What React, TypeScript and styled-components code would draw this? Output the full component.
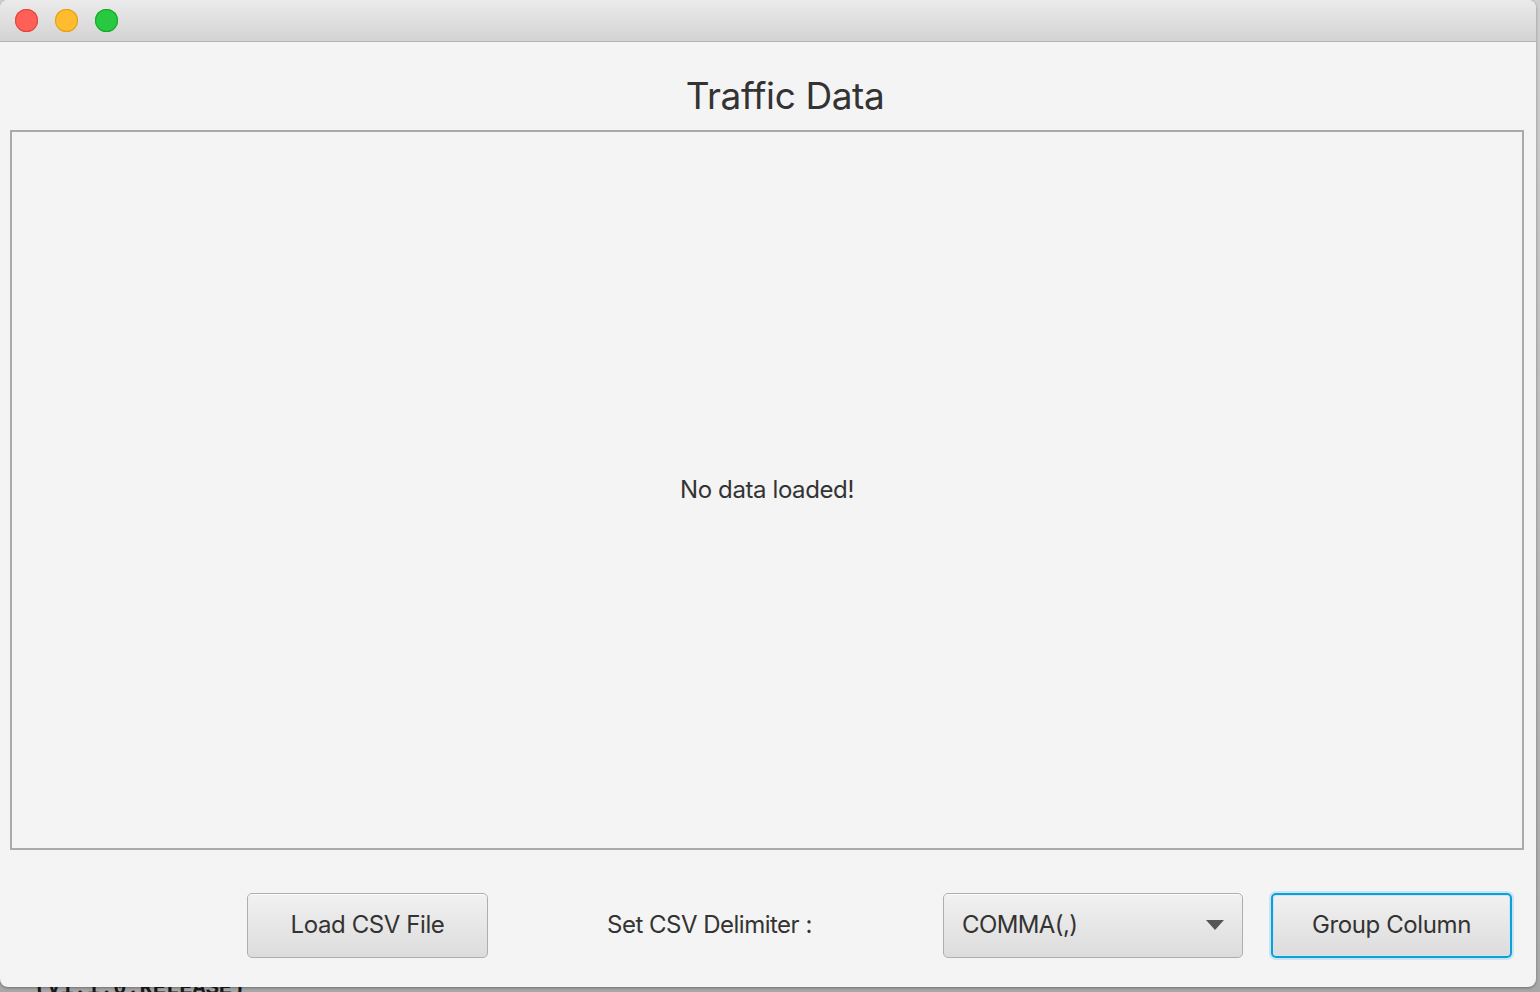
import React from "react";
import styled, { createGlobalStyle } from "styled-components";

const Global = createGlobalStyle`
  html, body { margin: 0; padding: 0; }
  body {
    background: #b9b9b9;
    font-family: Inter, "Noto Sans", "Liberation Sans", sans-serif;
    overflow: hidden;
  }
`;

const Desktop = styled.div`
  position: relative;
  width: 1540px;
  height: 992px;
  background: linear-gradient(#cfcfcf, #a8a8a8);
  overflow: hidden;
`;

const BehindText = styled.div`
  position: absolute;
  left: 34px;
  top: 978px;
  font-family: "Liberation Mono", monospace;
  font-size: 22px;
  line-height: 22px;
  font-weight: 700;
  color: #1a1a1a;
`;

const Window = styled.div`
  position: relative;
  width: 1536px;
  height: 987px;
  display: flex;
  flex-direction: column;
  background: #f4f4f4;
  border-radius: 8px;
  overflow: hidden;
  box-shadow: 0 1px 3px rgba(0, 0, 0, 0.35);
`;

const TitleBar = styled.div`
  height: 41px;
  flex: none;
  display: flex;
  align-items: center;
  gap: 17px;
  padding-left: 15px;
  background: linear-gradient(#ebebeb, #d3d3d3);
  border-bottom: 1px solid #b3b3b3;
`;

const Light = styled.span<{ $fill: string; $edge: string }>`
  width: 23px;
  height: 23px;
  border-radius: 50%;
  background: ${(p) => p.$fill};
  box-shadow: inset 0 0 0 1px ${(p) => p.$edge};
`;

const Content = styled.div`
  flex: 1;
  display: flex;
  flex-direction: column;
`;

const Heading = styled.h1`
  margin: 0;
  height: 88px;
  box-sizing: border-box;
  display: flex;
  align-items: center;
  justify-content: center;
  padding: 18px 0 0 34px;
  font-size: 37px;
  font-weight: 400;
  color: #333;
  letter-spacing: -0.4px;
`;

const TablePane = styled.div`
  margin: 0 12px 0 10px;
  height: 714px;
  border: 2px solid #aaaaaa;
  display: flex;
  align-items: center;
  justify-content: center;
  font-size: 24px;
  color: #333;
  letter-spacing: -0.4px;
  padding-bottom: 2px;
`;

const Footer = styled.div`
  flex: 1;
  display: flex;
  align-items: flex-start;
  padding-top: 43px;
  padding-left: 247px;
`;

const Button = styled.button<{ $focused?: boolean; $gap?: number }>`
  margin-left: ${(p) => p.$gap ?? 0}px;
  width: 241px;
  height: 65px;
  border-radius: 5px;
  border: ${(p) => (p.$focused ? "2px solid #0aa0d8" : "1px solid #aeaeae")};
  box-shadow: ${(p) =>
    p.$focused
      ? "0 0 0 2px rgba(10,160,216,0.18), inset 0 0 0 1px #cfe6f0"
      : "inset 0 1px 0 #fbfbfb"};
  background: linear-gradient(#f1f1f1, #dcdcdc);
  font-family: inherit;
  font-size: 24px;
  color: #333;
  letter-spacing: -0.4px;
  padding: 0 0 3px;
`;

const Label = styled.span<{ $gap: number; $width: number }>`
  margin-left: ${(p) => p.$gap}px;
  width: ${(p) => p.$width}px;
  height: 62px;
  display: flex;
  align-items: center;
  font-size: 24px;
  color: #333;
  letter-spacing: -0.5px;
  white-space: nowrap;
`;

const Combo = styled.div`
  width: 300px;
  height: 65px;
  box-sizing: border-box;
  border: 1px solid #aeaeae;
  border-radius: 5px;
  box-shadow: inset 0 1px 0 #fbfbfb;
  background: linear-gradient(#f1f1f1, #dcdcdc);
  display: flex;
  align-items: center;
  justify-content: space-between;
  padding: 0 18px 3px 18px;
  font-size: 24px;
  color: #333;
  letter-spacing: -0.6px;
`;

const Arrow = styled.svg`
  width: 18px;
  height: 10px;
  margin-top: 2px;
`;

export default function App() {
  return (
    <>
      <Global />
      <Desktop>
        <BehindText>(V1.1.0.RELEASE)</BehindText>
        <Window>
          <TitleBar>
            <Light $fill="#fe5f57" $edge="#e2463f" />
            <Light $fill="#febc2e" $edge="#e1a116" />
            <Light $fill="#28c840" $edge="#15a92b" />
          </TitleBar>
          <Content>
            <Heading>Traffic Data</Heading>
            <TablePane>No data loaded!</TablePane>
            <Footer>
              <Button>Load CSV File</Button>
              <Label $gap={119} $width={336}>
                Set CSV Delimiter :
              </Label>
              <Combo>
                <span>COMMA(,)</span>
                <Arrow viewBox="0 0 18 10">
                  <path d="M0 0 L18 0 L9 10 Z" fill="#555" />
                </Arrow>
              </Combo>
              <Button $focused $gap={28}>
                Group Column
              </Button>
            </Footer>
          </Content>
        </Window>
      </Desktop>
    </>
  );
}
